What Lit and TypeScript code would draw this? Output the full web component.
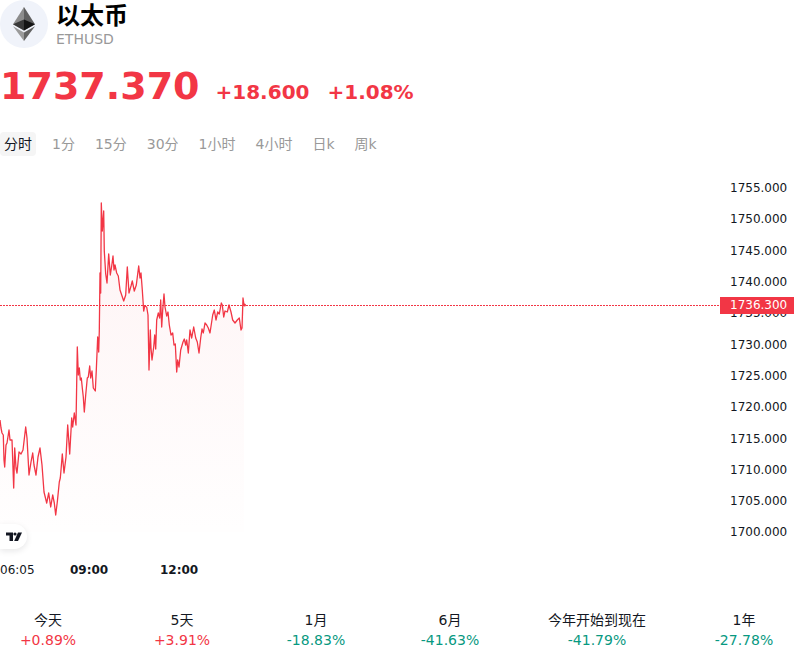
import {LitElement, css, html, svg} from 'lit';
import {customElement} from 'lit/decorators.js';

// traced price line, page coordinates
const LINE = [
  [0,420],[1,428],[2,433],[3.3,435],[4,460],[4.7,467],[6,445],[7,443],[9,430],[10,440],[12,440],[13.7,488],[14.7,448],
  [16,468],[17,473],[19,452],[21,454],[23,450],[25.7,427],[27,438],[29,475],[31,462],[32.7,453],[34,465],[36,475],
  [38,457],[40,448],[42,465],[44,492],[46.7,503],[48.7,493],[50.7,507],[52.7,495],[54.3,503],[55.7,515],[57.3,502],
  [59.3,482],[60.3,478],[61,470],[62.3,454],[64,473],[66,457],[67.7,425],[69.7,454],[71.7,418],[72.7,427],[74.3,413],
  [76,425],[77.3,347],[78.3,375],[79.3,368],[80.3,380],[81.3,378],[82.3,388],[83.3,397],[84.3,412],[85.7,395],
  [87.3,378],[88.3,377],[89.7,366],[90.7,378],[92,371],[93.3,388],[95.3,391],[96.3,370],[97.7,337],[98.7,352],
  [99.3,331],[100,273],[100.7,293],[101.3,203],[102.3,231],[103.7,211],[104.3,251],[105.7,274],[107,283],[108.7,254],
  [110.3,275],[111.7,266],[113,256],[114,270],[115,265],[116.7,273],[118.3,276],[120,290],[121.7,295],[123.7,301],
  [125.7,295],[127.3,267],[129,293],[131,286],[132.3,281],[134.3,291],[136.3,285],[138.7,266],[140,278],[141,273],
  [142.3,290],[143.7,311],[144.7,306],[146.7,307],[148,315],[149,370],[150.3,330],[151,348],[152,360],[153.7,347],
  [154.7,335],[155.7,349],[156.7,320],[158.3,313],[159.7,318],[160.7,300],[161.7,327],[162.7,310],[164,294],[165,307],
  [166.7,316],[168,312],[169.3,325],[171,335],[172.7,333],[174,345],[175.3,344],[176.7,372],[177.7,360],[179,367],
  [180.7,350],[183,342],[184.3,339],[185.7,345],[186.7,340],[188.3,353],[190,330],[191.7,338],[193.7,327],[195.7,338],
  [197.3,342],[199,353],[200.7,338],[202,329],[203.3,333],[205,323],[206.7,325],[208.3,328],[210,333],[212.7,315],
  [214.3,310],[216,320],[217.7,312],[219.3,314],[221.3,303],[222.3,305],[223.7,317],[225,311],[227.3,312],[229,305],
  [231,312],[232.7,320],[235,323],[237.3,320],[239.3,318],[241,330],[242,328],[243,298],[244,305],
];

const LINE_POINTS = LINE.map(p => p.join(',')).join(' ');
const AREA_POINTS = `0,532 ${LINE_POINTS} 244,532`;

const AXIS = ['1755.000','1750.000','1745.000','1740.000','1735.000','1730.000','1725.000','1720.000','1715.000','1710.000','1705.000','1700.000'];
const TABS = ['分时','1分','15分','30分','1小时','4小时','日k','周k'];
const TIMES = [
  {label: '06:05', x: 0, bold: false},
  {label: '09:00', x: 70, bold: true},
  {label: '12:00', x: 160, bold: true},
];
const RANGES = [
  {label: '今天', value: '+0.89%', up: true},
  {label: '5天', value: '+3.91%', up: true},
  {label: '1月', value: '-18.83%', up: false},
  {label: '6月', value: '-41.63%', up: false},
  {label: '今年开始到现在', value: '-41.79%', up: false},
  {label: '1年', value: '-27.78%', up: false},
];

@customElement('app-root')
export class AppRoot extends LitElement {
  static override styles = css`
    :host {
      display: block;
      width: 794px;
      height: 660px;
      background: #fff;
      font-family: "DejaVu Sans", "Noto Sans CJK SC", sans-serif;
      color: #131722;
    }
    .head {
      display: flex;
      align-items: center;
      gap: 8px;
      height: 48px;
    }
    .coin {
      width: 48px;
      height: 48px;
      border-radius: 50%;
      background: #f0f3fa;
      display: flex;
      align-items: center;
      justify-content: center;
    }
    .name {
      font-size: 24px;
      line-height: 30px;
      font-weight: 700;
      color: #000;
    }
    .symbol {
      font-size: 14px;
      line-height: 16px;
      color: #999;
    }
    .quote {
      display: flex;
      align-items: baseline;
      gap: 18px;
      margin-top: 14px;
      height: 48px;
      color: #f23645;
      font-weight: 700;
      font-size: 20px;
      line-height: 48px;
    }
    .price {
      font-size: 38px;
      margin-right: -2px;
    }
    .tabs {
      display: flex;
      gap: 12px;
      margin-top: 22px;
    }
    .tab {
      padding: 0 4px;
      font-size: 14px;
      line-height: 24px;
      color: #999;
      border-radius: 4px;
    }
    .tab.active {
      color: #131722;
      background: #f5f5f5;
    }
    .chart {
      position: relative;
      display: grid;
      grid-template-columns: 720px 74px;
      margin-top: 14px;
      height: 410px;
    }
    .pane svg {
      display: block;
    }
    .axis {
      padding-top: 3px;
      font-size: 12px;
      color: #131722;
    }
    .axis div {
      height: 31.32px;
      line-height: 31.32px;
      padding-left: 10px;
    }
    .last {
      position: absolute;
      left: 720px;
      top: 127px;
      width: 64px;
      height: 17px;
      padding-left: 10px;
      line-height: 17px;
      font-size: 12px;
      color: #fff;
      background: #f23645;
    }
    .times {
      position: relative;
      height: 20px;
      font-size: 12px;
      line-height: 20px;
    }
    .times span {
      position: absolute;
      top: 0;
    }
    .times .bold {
      font-weight: 700;
    }
    .attribution {
      position: absolute;
      left: 0;
      top: 354px;
      width: 27px;
      height: 25px;
      border-radius: 0 13px 13px 0;
      background: #fff;
      box-shadow: 0 2px 6px rgba(19, 23, 34, 0.1);
      display: flex;
      align-items: center;
      justify-content: flex-end;
      padding-right: 5px;
      box-sizing: border-box;
    }
    .ranges {
      display: flex;
      justify-content: space-between;
      width: 792px;
      margin-top: 30px;
    }
    .range {
      min-width: 72px;
      padding: 0 12px;
      text-align: center;
      font-size: 14px;
      line-height: 20px;
    }
    .up {
      color: #f23645;
    }
    .down {
      color: #089981;
    }
  `;

  private _ethLogo() {
    return svg`<svg width="22" height="34" viewBox="0 0 256 417" preserveAspectRatio="none">
      <polygon fill="#5f5f5f" points="127.96,0 125.16,9.5 125.16,285.17 127.96,287.96 255.92,212.32"/>
      <polygon fill="#8c8c8c" points="127.96,0 0,212.32 127.96,287.96 127.96,154.16"/>
      <polygon fill="#626262" points="127.96,312.19 126.38,314.1 126.38,412.3 127.96,416.9 255.99,236.59"/>
      <polygon fill="#9a9a9a" points="127.96,416.9 127.96,312.19 0,236.59"/>
      <polygon fill="#141414" points="127.96,287.96 255.92,212.32 127.96,154.16"/>
      <polygon fill="#393939" points="0,212.32 127.96,287.96 127.96,154.16"/>
    </svg>`;
  }

  private _chart() {
    return svg`<svg width="720" height="390" viewBox="0 170 720 390">
      <defs>
        <linearGradient id="fade" gradientUnits="userSpaceOnUse" x1="0" y1="203" x2="0" y2="560">
          <stop offset="0" stop-color="#f23645" stop-opacity="0.06"/>
          <stop offset="1" stop-color="#f23645" stop-opacity="0"/>
        </linearGradient>
      </defs>
      <polygon points=${AREA_POINTS} fill="url(#fade)"/>
      <polyline points=${LINE_POINTS} fill="none" stroke="#f23645" stroke-width="1.3" stroke-linejoin="round"/>
      <line x1="0" x2="720" y1="305.5" y2="305.5" stroke="#f23645" stroke-width="1" stroke-dasharray="2 1"/>
      <circle cx="244.5" cy="305" r="1.5" fill="#f23645"/>
    </svg>`;
  }

  override render() {
    return html`
      <div class="head">
        <div class="coin">${this._ethLogo()}</div>
        <div>
          <div class="name">以太币</div>
          <div class="symbol">ETHUSD</div>
        </div>
      </div>
      <div class="quote">
        <span class="price">1737.370</span>
        <span>+18.600</span>
        <span>+1.08%</span>
      </div>
      <div class="tabs">
        ${TABS.map((t, i) => html`<div class="tab ${i === 0 ? 'active' : ''}">${t}</div>`)}
      </div>
      <div class="chart">
        <div class="pane">
          ${this._chart()}
          <div class="times">
            ${TIMES.map(t => html`<span class=${t.bold ? 'bold' : ''} style="left:${t.x}px">${t.label}</span>`)}
          </div>
        </div>
        <div class="axis">
          ${AXIS.map(v => html`<div>${v}</div>`)}
        </div>
        <div class="last">1736.300</div>
        <div class="attribution">
          <svg width="16" height="10" viewBox="0 0 16 10">
            <path fill="#131722" d="M0 0.5H7V9H3.5V3.5H0Z"/>
            <circle cx="9" cy="2" r="1.6" fill="#131722"/>
            <path fill="#131722" d="M12 0.5H16L12 9H8.2Z"/>
          </svg>
        </div>
      </div>
      <div class="ranges">
        ${RANGES.map(r => html`
          <div class="range">
            <div>${r.label}</div>
            <div class=${r.up ? 'up' : 'down'}>${r.value}</div>
          </div>
        `)}
      </div>
    `;
  }
}
